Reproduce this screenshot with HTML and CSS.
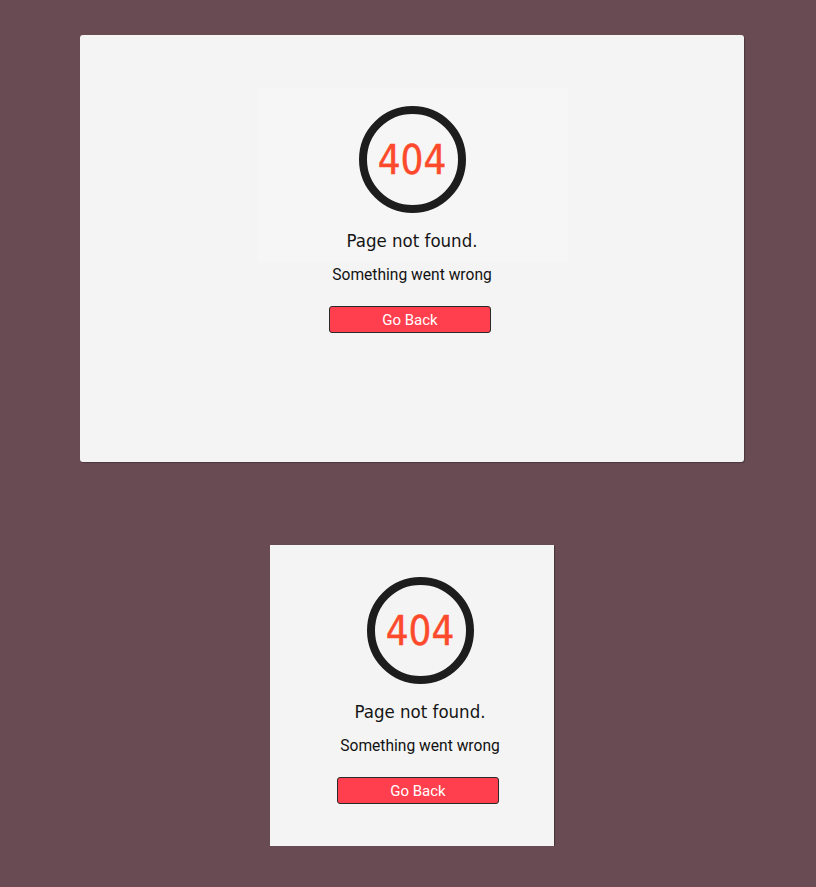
FILE: index.html
```html
<!DOCTYPE html>
<html>
<head>
<meta charset="utf-8">
<link rel="stylesheet" href="styles.css">
</head>
<body>
<main class="page">
  <section class="card card-wide">
    <div class="panel">
      <div class="badge"><span>404</span></div>
      <h1 class="title">Page not found.</h1>
    </div>
    <p class="message">Something went wrong</p>
    <button class="back">Go Back</button>
  </section>

  <section class="card card-narrow">
    <div class="badge"><span>404</span></div>
    <h1 class="title">Page not found.</h1>
    <p class="message">Something went wrong</p>
    <button class="back">Go Back</button>
  </section>
</main>
</body>
</html>
```
FILE: styles.css
```css
html, body {
  margin: 0;
  padding: 0;
  background: #694c53;
}

.page {
  padding: 35px 0 0 8px;
  display: flex;
  flex-direction: column;
  align-items: center;
  gap: 83px;
}

.card {
  box-sizing: border-box;
  background: #f4f4f4;
  display: flex;
  flex-direction: column;
  align-items: center;
  box-shadow: 1px 1px 1px rgba(0, 0, 0, 0.28);
}

.card-wide {
  width: 664px;
  height: 427px;
  border-radius: 3px;
  padding-top: 53px;
}

.card-narrow {
  width: 284px;
  height: 301px;
  padding: 32px 0 0 16px;
}

.panel {
  box-sizing: border-box;
  width: 311px;
  padding: 18px 0 11px;
  background: #f6f6f6;
  display: flex;
  flex-direction: column;
  align-items: center;
}

.badge {
  box-sizing: border-box;
  width: 107px;
  height: 107px;
  border: 8px solid #1d1d1d;
  border-radius: 50%;
  display: flex;
  align-items: center;
  justify-content: center;
}

.badge span {
  font-family: "DejaVu Sans Condensed", "DejaVu Sans", sans-serif;
  font-size: 40px;
  color: #fd4a2c;
  line-height: 1;
  margin-top: 1px;
  -webkit-text-stroke: 0.4px #fd4a2c;
}

.title {
  margin: 17px 0 0;
  font-family: "DejaVu Sans Condensed", "DejaVu Sans", sans-serif;
  font-weight: normal;
  font-size: 18.5px;
  line-height: 22px;
  color: #151515;
}

.message {
  margin: 3px 0 0;
  font-family: Roboto, "Liberation Sans", sans-serif;
  font-size: 15.6px;
  line-height: 19px;
  color: #111;
}

.card-narrow .title {
  margin-top: 17px;
}

.card-narrow .message {
  margin-top: 14px;
}

.back {
  box-sizing: border-box;
  margin: 21px 4px 0 0;
  width: 162px;
  height: 27px;
  padding: 0;
  background: #ff3e4e;
  border: 1px solid #2a2a2a;
  border-radius: 3px;
  font-family: Roboto, "Liberation Sans", sans-serif;
  font-size: 15px;
  color: #fff;
}
```
